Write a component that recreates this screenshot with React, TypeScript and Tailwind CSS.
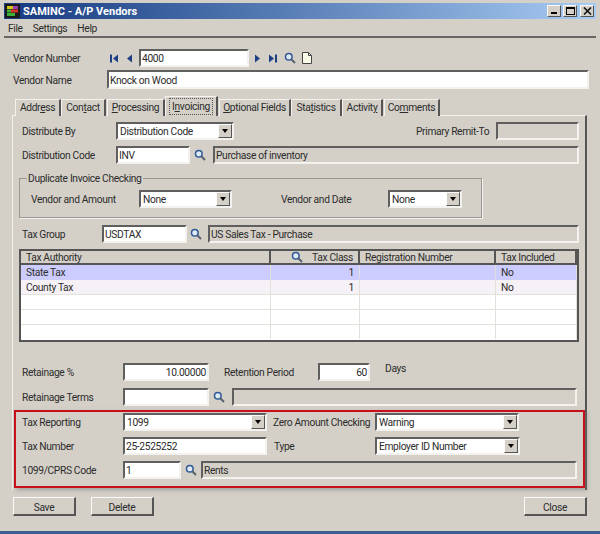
import type { ReactNode } from "react";

const sunken = "border-2 border-t-[#5f5f5f] border-l-[#5f5f5f] border-r-[#f4f2ee] border-b-[#f4f2ee]";
const raised = "border border-t-[#fafafa] border-l-[#fafafa] border-r-[#555555] border-b-[#555555]";

function Search() {
  return (
    <svg width="12" height="12" viewBox="0 0 12 12" className="shrink-0">
      <circle cx="4.8" cy="4.8" r="3.3" fill="#dfe9f5" stroke="#2f5a96" strokeWidth="1.5" />
      <path d="M7.3 7.3 11 11" stroke="#5a6270" strokeWidth="2" />
    </svg>
  );
}

function Input({ className, children }: { className: string; children?: ReactNode }) {
  return (
    <div className={`${sunken} ${className} bg-white flex items-center px-[1px] pt-[2px] overflow-hidden whitespace-nowrap`}>
      {children}
    </div>
  );
}

function ReadOnly({ className, children }: { className: string; children?: ReactNode }) {
  return (
    <div className={`${sunken} ${className} flex items-center px-[1px] pt-[2px] overflow-hidden whitespace-nowrap`}>
      {children}
    </div>
  );
}

function Select({ className, children }: { className: string; children: ReactNode }) {
  return (
    <div className={`${sunken} ${className} bg-white flex items-stretch whitespace-nowrap`}>
      <div className="flex-1 flex items-center px-[2px] pt-[2px]">{children}</div>
      <div className={`${raised} w-[14px] bg-[#d4d0c8] flex items-center justify-center`}>
        <div className="w-0 h-0 border-x-[3.5px] border-x-transparent border-t-[4px] border-t-black" />
      </div>
    </div>
  );
}

function Tab({ a, u, b, className, active }: { a: string; u: string; b: string; className: string; active?: boolean }) {
  return (
    <div
      className={`${className} ${
        active ? "h-[20px] z-10 border-r-2" : "h-[17px] border-r-2"
      } border-t border-l border-t-[#f4f2ee] border-l-[#f4f2ee] border-r-[#555555] bg-[#d4d0c8] flex items-center justify-center whitespace-nowrap`}
    >
      <span className={active ? "outline-1 outline-dotted outline-[#555555] px-[2px]" : ""}>
        {a}
        <span className="underline">{u}</span>
        {b}
      </span>
    </div>
  );
}

function Row({ className, children }: { className: string; children: ReactNode }) {
  return <div className={`flex items-center [&>span]:pt-[2px] [&>span]:whitespace-nowrap ${className}`}>{children}</div>;
}

function GridRow({ bg, line, children }: { bg: string; line: string; children?: ReactNode }) {
  return <div className={`flex h-[15px] border-b ${bg} ${line}`}>{children}</div>;
}

function Cell({ className, children }: { className: string; children?: ReactNode }) {
  return <div className={`${className} flex items-center px-[5px] pt-[2px] border-r border-r-[#e2e0da] overflow-hidden whitespace-nowrap`}>{children}</div>;
}

function Head({ className, children }: { className: string; children?: ReactNode }) {
  return <div className={`${className} flex items-center px-[5px] border-r-2 border-r-[#555555] whitespace-nowrap [&>span]:pt-[2px]`}>{children}</div>;
}

export default function App() {
  return (
    <div className="w-[600px] h-[534px] overflow-hidden bg-[#d4d0c8] text-[#2c2c2c] text-[10.25px] tracking-[-0.35px] flex flex-col pt-[3px] font-['Roboto','Liberation_Sans',sans-serif]">
      {/* title bar */}
      <div className="mx-[4px] h-[16px] shrink-0 bg-gradient-to-r from-[#173a80] to-[#a8ccf2] flex items-center pl-[1px] pr-[2px]">
        <svg width="15" height="14" viewBox="0 0 15 14" className="shrink-0">
          <rect width="15" height="14" fill="#1a1a1a" />
          <rect x="2" y="2" width="6" height="3" fill="#d8c21c" />
          <rect x="8" y="2" width="5" height="3" fill="#9a3db0" />
          <rect x="2" y="5.5" width="4" height="3" fill="#3fae3a" />
          <rect x="6" y="5.5" width="7" height="3" fill="#d8342c" />
          <rect x="2" y="9" width="8" height="3" fill="#3fae3a" />
        </svg>
        <span className="ml-[3px] pt-[2px] text-white font-bold text-[11px] tracking-normal flex-1">SAMINC - A/P Vendors</span>
        <div className={`${raised} w-[14px] h-[12px] bg-[#d4d0c8] flex items-end pl-[3px] pb-[2px]`}>
          <span className="w-[6px] h-[2px] bg-black" />
        </div>
        <div className={`${raised} ml-[2px] w-[14px] h-[12px] bg-[#d4d0c8] flex items-center justify-center`}>
          <span className="w-[9px] h-[8px] border border-black border-t-2" />
        </div>
        <div className={`${raised} ml-[3px] w-[14px] h-[12px] bg-[#d4d0c8] flex items-center justify-center`}>
          <svg width="9" height="8" viewBox="0 0 9 8">
            <path d="M1 0.5 8 7.5M8 0.5 1 7.5" stroke="#111" strokeWidth="1.6" />
          </svg>
        </div>
      </div>

      {/* menu */}
      <div className="mx-[4px] h-[17px] shrink-0 flex items-center gap-[10px] pl-[4px] pt-[2px]">
        <span>File</span>
        <span>Settings</span>
        <span>Help</span>
      </div>
      <div className="mx-[4px] h-[2px] shrink-0 bg-[#666666]" />

      {/* vendor header */}
      <Row className="ml-[13px] mt-[11px] h-[18px] shrink-0">
        <span className="w-[97px]">Vendor Number</span>
        <svg width="23" height="9" viewBox="0 0 23 9" fill="#1c3f86" className="shrink-0">
          <rect x="0" y="0.5" width="2" height="8" />
          <path d="M8 0.5v8l-5-4zM22 0.5v8l-5-4z" />
        </svg>
        <Input className="ml-[6px] w-[110px] h-[18px]">4000</Input>
        <svg width="23" height="9" viewBox="0 0 23 9" fill="#1c3f86" className="ml-[6px] shrink-0">
          <path d="M0 0.5v8l5-4zM14 0.5v8l5-4z" />
          <rect x="20" y="0.5" width="2" height="8" />
        </svg>
        <div className="ml-[6px]"><Search /></div>
        <svg width="10" height="12" viewBox="0 0 10 12" className="ml-[6px] shrink-0">
          <path d="M.5.5H6.5L9.5 3.5V11.5H.5Z" fill="#fbfbe8" stroke="#444" />
          <path d="M6.5.5V3.5H9.5" fill="none" stroke="#444" />
        </svg>
      </Row>
      <Row className="ml-[13px] mt-[3px] h-[19px] shrink-0">
        <span className="w-[94px]">Vendor Name</span>
        <Input className="w-[482px] h-[19px]">Knock on Wood</Input>
      </Row>

      {/* tabs */}
      <div className="ml-[15px] mt-[7px] flex items-end h-[20px] shrink-0 relative -mb-[1px]">
        <Tab a="Addr" u="e" b="ss" className="w-[46px]" />
        <Tab a="Con" u="t" b="act" className="w-[45px]" />
        <Tab a="" u="P" b="rocessing" className="ml-[1px] w-[58px]" />
        <Tab a="I" u="n" b="voicing" className="w-[53px]" active />
        <Tab a="" u="O" b="ptional Fields" className="ml-[1px] w-[72px]" />
        <Tab a="Sta" u="t" b="istics" className="w-[51px]" />
        <Tab a="Activit" u="y" b="" className="w-[41px]" />
        <Tab a="Co" u="m" b="ments" className="ml-[1px] w-[56px]" />
      </div>

      {/* tab panel */}
      <div className="ml-[12px] w-[575px] h-[375px] shrink-0 border-t border-l border-t-[#f4f2ee] border-l-[#f4f2ee] border-r-2 border-r-[#555555]">
        <Row className="ml-[9px] mt-[6px] h-[18px]">
          <span className="w-[94px]">Distribute By</span>
          <Select className="w-[118px] h-[18px]">Distribution Code</Select>
          <span className="ml-[182px] w-[80px]">Primary Remit-To</span>
          <ReadOnly className="w-[83px] h-[18px]" />
        </Row>
        <Row className="ml-[9px] mt-[6px] h-[18px]">
          <span className="w-[94px]">Distribution Code</span>
          <Input className="w-[74px] h-[18px]">INV</Input>
          <div className="ml-[4px]"><Search /></div>
          <ReadOnly className="ml-[7px] w-[366px] h-[18px]">Purchase of inventory</ReadOnly>
        </Row>

        {/* duplicate invoice group */}
        <fieldset className="ml-[6px] mt-[8px] w-[463px] h-[46px] border border-[#9a9894] shadow-[1px_1px_0_#f4f2ee] px-[11px] pt-[6px] min-w-0">
          <legend className="ml-[-4px] px-[1px] pt-[2px] leading-[10px]">Duplicate Invoice Checking</legend>
          <Row className="h-[18px]">
            <span className="w-[108px]">Vendor and Amount</span>
            <Select className="w-[93px] h-[18px]">None</Select>
            <span className="ml-[49px] w-[107px]">Vendor and Date</span>
            <Select className="w-[74px] h-[18px]">None</Select>
          </Row>
        </fieldset>

        <Row className="ml-[9px] mt-[7px] h-[18px]">
          <span className="w-[80px]">Tax Group</span>
          <Input className="w-[85px] h-[18px]">USDTAX</Input>
          <div className="ml-[3px]"><Search /></div>
          <ReadOnly className="ml-[6px] w-[371px] h-[18px]">US Sales Tax - Purchase</ReadOnly>
        </Row>

        {/* tax authority grid */}
        <div className="ml-[6px] mt-[6px] w-[560px] h-[93px] border-2 border-[#555555] bg-white">
          <div className="flex h-[14px] border-b-2 border-b-[#555555] bg-[#d4d0c8]">
            <Head className="w-[250px]"><span>Tax Authority</span></Head>
            <Head className="w-[89px]">
              <div className="ml-[15px]"><Search /></div>
              <span className="ml-auto">Tax Class</span>
            </Head>
            <Head className="w-[136px]"><span>Registration Number</span></Head>
            <Head className="flex-1"><span>Tax Included</span></Head>
          </div>
          <GridRow bg="bg-[#ccccff]" line="border-b-[#ccccff]">
            <Cell className="w-[250px]">State Tax</Cell>
            <Cell className="w-[89px] justify-end">1</Cell>
            <Cell className="w-[136px]" />
            <Cell className="flex-1">No</Cell>
          </GridRow>
          <GridRow bg="bg-[#f6f1f6]" line="border-b-[#e2e0da]">
            <Cell className="w-[250px]">County Tax</Cell>
            <Cell className="w-[89px] justify-end">1</Cell>
            <Cell className="w-[136px]" />
            <Cell className="flex-1">No</Cell>
          </GridRow>
          <GridRow bg="bg-white" line="border-b-[#e2e0da]">
            <Cell className="w-[250px]" />
            <Cell className="w-[89px]" />
            <Cell className="w-[136px]" />
            <Cell className="flex-1" />
          </GridRow>
          <GridRow bg="bg-white" line="border-b-[#e2e0da]">
            <Cell className="w-[250px]" />
            <Cell className="w-[89px]" />
            <Cell className="w-[136px]" />
            <Cell className="flex-1" />
          </GridRow>
          <GridRow bg="bg-white" line="border-b-white">
            <Cell className="w-[250px]" />
            <Cell className="w-[89px]" />
            <Cell className="w-[136px]" />
            <Cell className="flex-1" />
          </GridRow>
        </div>

        <Row className="ml-[9px] mt-[21px] h-[18px]">
          <span className="w-[101px]">Retainage %</span>
          <Input className="w-[86px] h-[18px] justify-end">10.00000</Input>
          <span className="ml-[15px] w-[94px]">Retention Period</span>
          <Input className="w-[52px] h-[18px] justify-end">60</Input>
          <span className="ml-[15px] -mt-[8px]">Days</span>
        </Row>
        <Row className="ml-[9px] mt-[7px] h-[18px]">
          <span className="w-[101px]">Retainage Terms</span>
          <Input className="w-[86px] h-[18px]" />
          <div className="ml-[4px]"><Search /></div>
          <ReadOnly className="ml-[7px] w-[345px] h-[18px]" />
        </Row>

        {/* highlighted tax reporting block */}
        <div className="ml-[1px] mt-[4px] w-[571px] h-[78px] border-2 border-[#c8101c] shadow-[2px_2px_4px_#77777788] pl-[6px]">
          <Row className="mt-[1px] h-[18px]">
            <span className="w-[101px]">Tax Reporting</span>
            <Select className="w-[144px] h-[18px]">1099</Select>
            <span className="ml-[6px] w-[102px]">Zero Amount Checking</span>
            <Select className="w-[144px] h-[18px]">Warning</Select>
          </Row>
          <Row className="mt-[6px] h-[18px]">
            <span className="w-[101px]">Tax Number</span>
            <Input className="w-[144px] h-[18px]">25-2525252</Input>
            <span className="ml-[7px] w-[101px]">Type</span>
            <Select className="w-[145px] h-[18px]">Employer ID Number</Select>
          </Row>
          <Row className="mt-[6px] h-[18px]">
            <span className="w-[101px]">1099/CPRS Code</span>
            <Input className="w-[58px] h-[18px]">1</Input>
            <div className="ml-[4px]"><Search /></div>
            <ReadOnly className="ml-[4px] w-[376px] h-[18px]">Rents</ReadOnly>
          </Row>
        </div>
      </div>

      {/* footer buttons */}
      <div className="ml-[13px] mr-[13px] mt-[7px] flex shrink-0">
        <button className={`${raised} border-r-2 border-b-2 pt-[2px] w-[63px] h-[19px]`}>Save</button>
        <button className={`${raised} border-r-2 border-b-2 pt-[2px] ml-[15px] w-[63px] h-[19px]`}>Delete</button>
        <button className={`${raised} border-r-2 border-b-2 pt-[2px] ml-auto w-[63px] h-[19px]`}>Close</button>
      </div>

      <div className="mt-auto h-[3px] bg-[#3a5f8f] shrink-0" />
    </div>
  );
}
